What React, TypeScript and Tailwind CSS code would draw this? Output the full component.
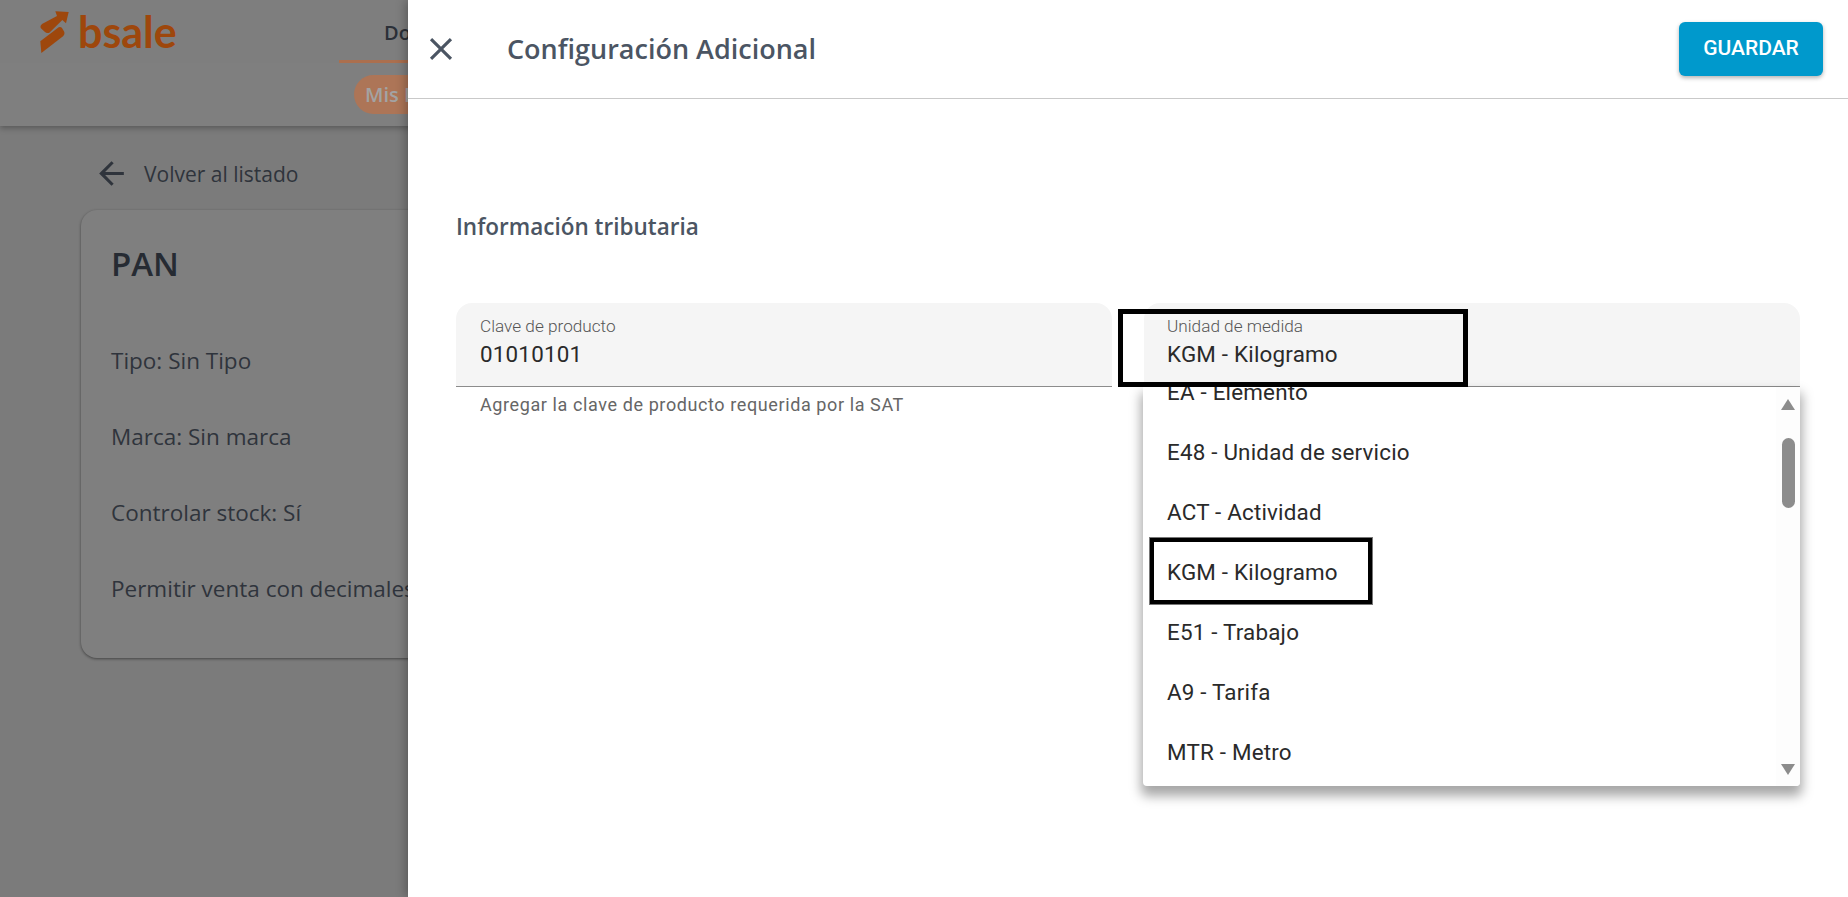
const units = ["EA - Elemento", "E48 - Unidad de servicio", "ACT - Actividad", "KGM - Kilogramo", "E51 - Trabajo", "A9 - Tarifa", "MTR - Metro"];
const details = ["Tipo: Sin Tipo", "Marca: Sin marca", "Controlar stock: Sí", "Permitir venta con decimales: Sí"];

function BackgroundPage() {
  return (
    <div className="flex h-full flex-col bg-[#7b7b7b] font-['Open_Sans',sans-serif]">
      <header className="shrink-0 bg-[#7f7f7f] shadow-[0_2px_6px_rgba(0,0,0,0.3)]">
        <div className="flex h-[63px] items-center bg-[#7e7e7e] pl-[36px]">
          <svg viewBox="0 0 120 144" className="h-[48px] w-[40px] shrink-0 fill-[#9e470c]">
            <path d="M58 10 L98 12 L90 46 L79 36 L40 74 Q32 77 26 71 L14 60 Q11 54 18 48 L63 24 Z" />
            <path d="M68 58 Q74 56 78 60 L85 72 Q87 79 82 84 L16 135 L13 100 Z" />
          </svg>
          <span className="ml-[2px] w-[100px] font-['Lato',sans-serif] text-[43px] leading-none font-bold text-[#9e470c]">bsale</span>
          <div className="ml-[161px] flex h-full w-[69px] flex-col items-start">
            <span className="mt-[20px] pl-[45px] text-[20px] leading-[26px] font-semibold whitespace-nowrap text-[#2b3038]">Documentos</span>
            <span className="mt-auto h-[3px] w-[160px] shrink-0 bg-[#ab6f4e]"></span>
          </div>
        </div>
        <div className="flex h-[63px] items-center pl-[354px]">
          <span className="rounded-full bg-[#ad7557] px-[11px] py-[6px] text-[20px] leading-[27px] font-semibold whitespace-nowrap text-[#a3a3a3]">Mis Productos</span>
        </div>
      </header>
      <div className="flex items-center pt-[29px] pl-[93px]">
        <svg viewBox="0 0 24 24" className="h-[37px] w-[37px] fill-[#2f343c]">
          <path d="M20 11H7.83l5.59-5.59L12 4l-8 8 8 8 1.41-1.41L7.83 13H20v-2z" />
        </svg>
        <span className="ml-[14px] text-[21px] leading-[30px] text-[#2f343c]">Volver al listado</span>
      </div>
      <div className="mt-[18px] ml-[81px] h-[448px] w-[700px] rounded-[16px] bg-[#7f7f7f] px-[30px] pt-[30px] shadow-[0_1px_3px_rgba(0,0,0,0.45)]">
        <h1 className="text-[33px] leading-[48px] font-semibold text-[#262b33]">PAN</h1>
        <ul className="mt-[58px] flex flex-col gap-[46px]">
          {details.map((d) => (
            <li key={d} className="text-[22.5px] leading-[30px] whitespace-nowrap text-[#2f343c]">{d}</li>
          ))}
        </ul>
      </div>
    </div>
  );
}

function UnitDropdown() {
  return (
    <div className="absolute top-full right-0 z-10 flex h-[399px] w-[657px] overflow-hidden rounded-b-[4px] bg-white font-['Roboto',sans-serif] shadow-[0_8px_12px_2px_rgba(0,0,0,0.35)]">
      <ul className="mt-[-24px] flex-1 pl-[24px]">
        {units.map((u) => (
          <li key={u} className="relative flex h-[60px] items-center text-[22.4px] tracking-[0.2px] text-[#2a2a2a]">
            {u}
            {u.startsWith("KGM") && (
              <span className="absolute top-[-5px] left-[-17px] h-[66px] w-[222px] border-[4px] border-black outline outline-[1px] outline-[#777]"></span>
            )}
          </li>
        ))}
      </ul>
      <div className="flex w-[24px] shrink-0 flex-col items-center bg-[#fdfdfd]">
        <span className="mt-[12px] h-0 w-0 border-x-[7px] border-b-[11px] border-x-transparent border-b-[#8c8c8c]"></span>
        <span className="mt-[28px] h-[70px] w-[13px] rounded-full bg-[#8c8c8c]"></span>
        <span className="mt-auto mb-[11px] h-0 w-0 border-x-[7px] border-t-[11px] border-x-transparent border-t-[#8c8c8c]"></span>
      </div>
    </div>
  );
}

function Drawer() {
  return (
    <aside className="absolute inset-y-0 right-0 flex w-[1440px] flex-col bg-white shadow-[-2px_0_10px_rgba(0,0,0,0.3)]">
      <div className="flex h-[99px] shrink-0 items-center border-b border-[#c9c9c9] pr-[25px] pl-[14px]">
        <svg viewBox="0 0 24 24" className="h-[38px] w-[38px] fill-[#4b5563]">
          <path d="M19 6.41 17.59 5 12 10.59 6.41 5 5 6.41 10.59 12 5 17.59 6.41 19 12 13.41 17.59 19 19 17.59 13.41 12z" />
        </svg>
        <h2 className="ml-[47px] font-['Open_Sans',sans-serif] text-[27px] font-semibold text-[#4b5563]">Configuración Adicional</h2>
        <button className="ml-auto h-[54px] w-[144px] rounded-[6px] bg-[#0099cc] font-['Roboto',sans-serif] text-[21px] font-medium text-white shadow-[0_2px_4px_rgba(0,0,0,0.3)]">GUARDAR</button>
      </div>
      <div className="px-[48px] pt-[112px]">
        <h3 className="font-['Open_Sans',sans-serif] text-[22.5px] leading-[32px] font-semibold text-[#4b5563]">Información tributaria</h3>
        <div className="mt-[60px] grid grid-cols-2 gap-[32px] font-['Roboto',sans-serif]">
          <div>
            <div className="h-[84px] rounded-t-[16px] border-b border-[#8c8c8c] bg-[#f5f5f5] px-[24px] pt-[13px]">
              <p className="text-[17.2px] leading-[20px] font-light text-[#555]">Clave de producto</p>
              <p className="mt-[3px] text-[22.4px] leading-[30px] tracking-[0.2px] text-[#2a2a2a]">01010101</p>
            </div>
            <p className="mt-[6px] px-[24px] text-[18px] leading-[24px] tracking-[0.6px] text-[#666]">Agregar la clave de producto requerida por la SAT</p>
          </div>
          <div className="relative h-[84px]">
            <div className="h-[84px] rounded-t-[16px] border-b border-[#8c8c8c] bg-[#f5f5f5] pt-[13px] pr-[24px] pl-[23px]">
              <p className="text-[17.2px] leading-[20px] font-light text-[#555]">Unidad de medida</p>
              <p className="mt-[3px] text-[22.4px] leading-[30px] tracking-[0.2px] text-[#2a2a2a]">KGM - Kilogramo</p>
            </div>
            <span className="absolute top-[6px] left-[-26px] z-20 h-[78px] w-[350px] border-[5px] border-black"></span>
            <UnitDropdown />
          </div>
        </div>
      </div>
    </aside>
  );
}

export default function App() {
  return (
    <div className="relative h-[897px] w-[1848px] overflow-hidden">
      <BackgroundPage />
      <Drawer />
    </div>
  );
}
